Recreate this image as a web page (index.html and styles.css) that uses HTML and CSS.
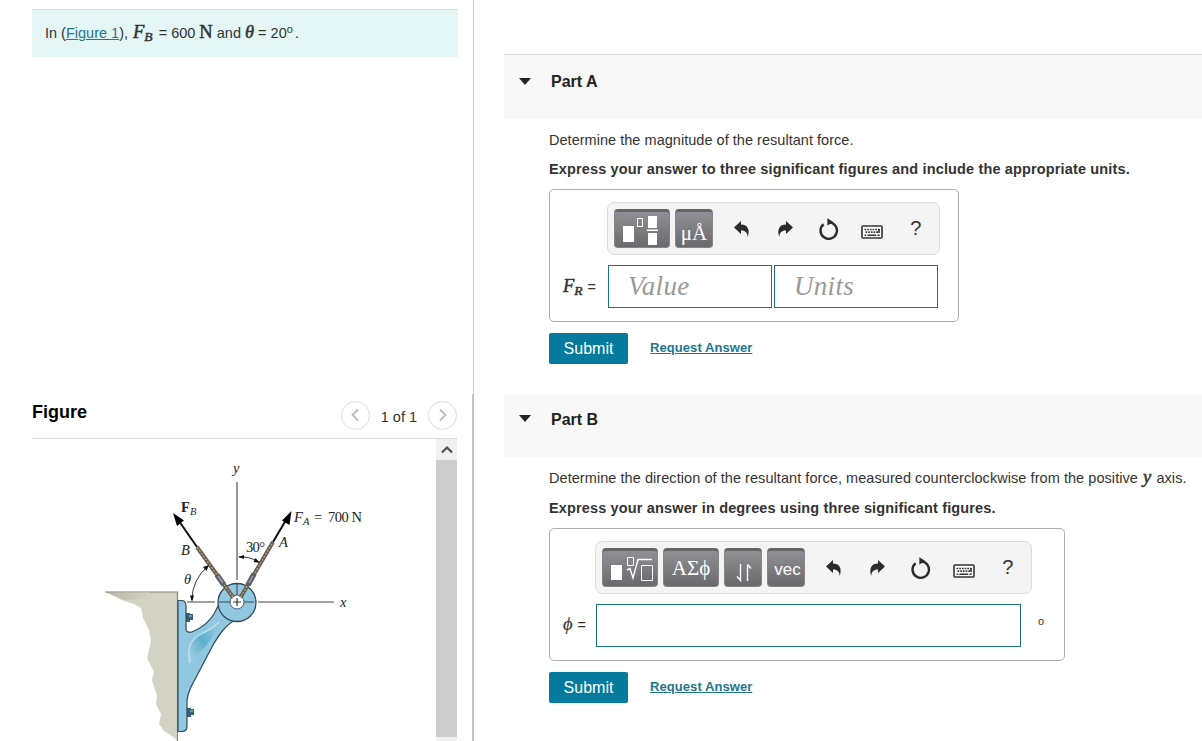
FILE: index.html
```
<!DOCTYPE html>
<html lang="en">
<head>
    <meta charset="UTF-8">
    <meta name="viewport" content="width=device-width, initial-scale=1.0">
    <title>Resultant Force</title>
    <link rel="stylesheet" href="styles.css">
</head>
<body>
    <!-- shared toolbar icons -->
    <svg class="defs" width="0" height="0">
        <symbol id="undo" viewBox="0 0 18 18">
            <path d="M1 7.5 L8 1 V4.6 C14 4.6 17.4 9 14.8 17 C14.4 12.4 12.2 10.2 8 10.4 V14 Z"/>
        </symbol>
        <symbol id="reset" viewBox="0 0 22 22">
            <path d="M11 4.4 A8.200 8.200 0 1 1 5.600 6.200" fill="none" stroke="#2b2b2b" stroke-width="2.400"/>
            <path d="M9.400 .2 L15.200 4 L9.400 7.600 Z"/>
        </symbol>
        <symbol id="keyboard" viewBox="0 0 22 14">
            <rect x="1" y="1" width="20" height="12" rx="1" fill="#fff" stroke="#333" stroke-width="1.600"/>
            <path d="M3.500 4.500 H18.800 M4.500 7.200 H17" stroke="#333" stroke-width="1.700" stroke-dasharray="1.700 1"/>
            <path d="M3.500 10.200 H5.200 M6.400 10.200 H15.300 M16.500 10.200 H18.700 M18 4 V8" stroke="#333" stroke-width="1.600"/>
        </symbol>
    </svg>

    <div class="page">
        <div class="left">
            <div class="intro">In (<a href="#">Figure 1</a>), <span class="math fb">F<sub>B</sub></span> = 600 <span class="math unit">N</span> and <span class="math theta">θ</span> = 20<sup>o</sup> .</div>

            <div class="figure-head">
                <h2>Figure</h2>
                <div class="pager">
                    <button class="round"><svg width="10" height="14"><path d="M8 1.500 L2.500 7 L8 12.500"/></svg></button>
                    <span>1 of 1</span>
                    <button class="round"><svg width="10" height="14"><path d="M2 1.500 L7.500 7 L2 12.500"/></svg></button>
                </div>
            </div>
            <div class="figure-body">
                <svg class="diagram" width="404" height="302" viewBox="32 439 404 302">
                    <defs>
                        <linearGradient id="rib" x1="0" y1="1" x2="1" y2="0">
                            <stop offset="0" stop-color="#a9d6e8"/>
                            <stop offset=".5" stop-color="#5faecb"/>
                            <stop offset="1" stop-color="#9bcfe5"/>
                        </linearGradient>
                        <linearGradient id="ledge" x1="0" y1="0" x2="1" y2="0">
                            <stop offset="0" stop-color="#a8a68f"/>
                            <stop offset="1" stop-color="#d3d2c3"/>
                        </linearGradient>
                    </defs>

                    <!-- wall -->
                    <path d="M105 592 H178 V741 L172 736 L164 731 L159 724 L161 714 L156 704 L157 696 L152 680 L154 672 L147 658 L151 641 L149 630 L143 618 L141 608 L134 604 L124 601 Z" fill="#d3d2c3"/>
                    <path d="M105 592 H177.500 V741" fill="none" stroke="#8b897a" stroke-width="1.200"/>
                    <path d="M106 592 H150 L140 599 L124 600 Z" fill="url(#ledge)" opacity=".6"/>

                    <!-- bolts -->
                    <path d="M186 613 h4 v1 h3 v6 h-3 v2 h-4 Z" fill="#385f78"/>
                    <path d="M187 708 h4 v1 h3 v6 h-3 v2 h-4 Z" fill="#385f78"/>
                    <path d="M189 616 h3 M190 711 h3" stroke="#9bcfe5"/>

                    <!-- bracket -->
                    <path d="M178 600.500 H182 Q186 601 186 606 V629 Q186 633 192 632 C202 628 209 622 214 614 L219 604 L236 620 C226 624 219 635 213 645 L191 687 Q187 696 187 702 V726 Q187 731.500 182 731.500 H178 Z" fill="#8fc8e0" stroke="#34495a" stroke-width="1.200"/>
                    <path d="M190 663 C187 645 191 639 203 633 Q212 629 219 622 Q213 638 205 647 Q198 654 190 663 Z" fill="url(#rib)"/>
                    <path d="M189.500 663 C187 645 191 639 203 633 Q212 629 219 622" fill="none" stroke="#c3e3ef" stroke-width="1.200"/>

                    <!-- pin -->
                    <circle cx="237" cy="602.500" r="19" fill="#8fc8e0" stroke="#34495a" stroke-width="1.300"/>
                    <path d="M187 602 H215 M219 602 H254 M258 602 H334 M237 482 V580 M237 584 V597" stroke="#444" stroke-width="1.100"/>
                    <circle cx="237" cy="602" r="7" fill="#fff" stroke="#496474"/>

                    <!-- ropes -->
                    <path d="M235 600 L197 547 M239 600 L273 542" stroke="#675b4d" stroke-width="4"/>
                    <path d="M235 600 L197 547 M239 600 L273 542" stroke="#b5a282" stroke-width="1.400" stroke-dasharray="2 1.500"/>
                    <path d="M224 585 L217 575 M248 585 L254 574" stroke="#59626b" stroke-width="5.500"/>
                    <path d="M223 583 L218 576 M249 583 L253 576" stroke="#9aa0a5" stroke-width="1.500"/>
                    <circle cx="237" cy="602" r="6" fill="#fff"/>
                    <path d="M233 602 H241 M237 598 V606" stroke="#333" stroke-width="1.200"/>

                    <!-- force arrows -->
                    <path d="M197 547 L179 521 M273 542 L286 520" stroke="#111" stroke-width="2"/>
                    <path d="M173 513 L184 520.500 L177 526 Z M291.500 511 L282 520.500 L289.500 525 Z" fill="#000"/>

                    <!-- angles -->
                    <path d="M192 600 Q192 580 208 566" fill="none" stroke="#333"/>
                    <path d="M239 557 Q249 556 259 562" fill="none" stroke="#333"/>
                    <path d="M192 602 L190 595.500 H194 Z M209 565 L206.500 571 L203 567 Z M238 557 L244 555 V559 Z M260 563 L253.500 562 L255.500 558 Z" fill="#111"/>

                    <g class="labels">
                        <text x="233" y="473" class="i">y</text>
                        <text x="340" y="607" class="i">x</text>
                        <text x="181" y="512" class="b">F</text>
                        <text x="190" y="515" class="i s">B</text>
                        <text x="181" y="555" class="i">B</text>
                        <text x="279" y="547" class="i">A</text>
                        <text x="184" y="584" class="i">θ</text>
                        <text x="246" y="552" textLength="19">30°</text>
                        <text x="294" y="522" class="i">F</text>
                        <text x="303" y="525" class="i s">A</text>
                        <text x="314" y="522">=</text>
                        <text x="328" y="522" textLength="34">700 N</text>
                    </g>
                </svg>
                <div class="scrollbar">
                    <div class="up"><svg width="12" height="9"><path d="M1 7.500 L6 2.500 L11 7.500"/></svg></div>
                    <div class="thumb"></div>
                </div>
            </div>
        </div>

        <div class="divider"></div>

        <div class="right">
            <section class="part part-a">
                <div class="part-head"><span class="caret"></span><h3>Part A</h3></div>
                <div class="part-body">
                    <p>Determine the magnitude of the resultant force.</p>
                    <p class="express">Express your answer to three significant figures and include the appropriate units.</p>
                    <div class="answer answer-a">
                        <div class="toolbar">
                            <button class="tool wide"><svg width="56" height="39">
                                <path d="M9 17 h11 v16 h-11 Z M34 7 h9 v12 h-9 Z M34 24 h9 v12 h-9 Z M33 20.500 h11 v1.500 h-11 Z" fill="#fff"/>
                                <rect x="23.500" y="9.500" width="5" height="8" fill="none" stroke="#fff"/>
                            </svg></button>
                            <button class="tool units">μÅ</button>
                            <div class="icons">
                                <svg width="18" height="18"><use href="#undo"/></svg>
                                <svg width="18" height="18" class="flip"><use href="#undo"/></svg>
                                <svg width="22" height="22"><use href="#reset"/></svg>
                                <svg width="22" height="14" class="kb"><use href="#keyboard"/></svg>
                                <span>?</span>
                            </div>
                        </div>
                        <div class="entry">
                            <label><span class="math">F<sub>R</sub></span> =</label>
                            <div class="field">Value</div>
                            <div class="field">Units</div>
                        </div>
                    </div>
                    <div class="actions">
                        <button class="submit">Submit</button>
                        <a href="#">Request Answer</a>
                    </div>
                </div>
            </section>

            <section class="part part-b">
                <div class="part-head"><span class="caret"></span><h3>Part B</h3></div>
                <div class="part-body">
                    <p class="direction">Determine the direction of the resultant force, measured counterclockwise from the positive <span class="math">y</span> axis.</p>
                    <p class="express">Express your answer in degrees using three significant figures.</p>
                    <div class="answer answer-b">
                        <div class="toolbar">
                            <button class="tool wide"><svg width="56" height="39">
                                <path d="M9 17 h11 v15 h-11 Z" fill="#fff"/>
                                <path d="M25.500 9.500 h6 v8 h-6 Z M39.500 17.500 h11 v15 h-11 Z" fill="none" stroke="#fff"/>
                                <path d="M25 22 L28 20.500 L31 30 L36 11.500 H50" fill="none" stroke="#fff" stroke-width="1.400"/>
                            </svg></button>
                            <button class="tool wide greek">ΑΣϕ</button>
                            <button class="tool"><svg width="38" height="39">
                                <path d="M16.500 16 V32 M13 28.500 L16.500 32.500 V16 M23.500 33 V17 M23.500 16.500 L27 20.500" fill="none" stroke="#fff" stroke-width="1.400"/>
                            </svg></button>
                            <button class="tool vec">vec</button>
                            <div class="icons">
                                <svg width="18" height="18"><use href="#undo"/></svg>
                                <svg width="18" height="18" class="flip"><use href="#undo"/></svg>
                                <svg width="22" height="22"><use href="#reset"/></svg>
                                <svg width="22" height="14" class="kb"><use href="#keyboard"/></svg>
                                <span>?</span>
                            </div>
                        </div>
                        <div class="entry">
                            <label><span class="math phi">ϕ</span> =</label>
                            <div class="field"></div>
                            <span class="degree">o</span>
                        </div>
                    </div>
                    <div class="actions">
                        <button class="submit">Submit</button>
                        <a href="#">Request Answer</a>
                    </div>
                </div>
            </section>
        </div>
    </div>
</body>
</html>
```
FILE: styles.css
```
* {
    box-sizing: border-box;
}
body {
    margin: 0;
    background: #fff;
    color: #333;
    font-family: "Liberation Sans", Arial, sans-serif;
    font-size: 14.5px;
    overflow: hidden;
}
h2, h3, p {
    margin: 0;
}
button {
    padding: 0;
    border: none;
    font-family: inherit;
    cursor: pointer;
}
svg {
    display: block;
}
.defs {
    display: none;
}
a {
    color: #1f7690;
}
sub, sup {
    line-height: 0;
}
.math {
    font-family: "Liberation Serif", "Times New Roman", serif;
    font-style: italic;
    font-size: 18.5px;
    line-height: 0;
    -webkit-text-stroke: 0.5px #333;
}
.math sub {
    font-size: 13.5px;
    vertical-align: -3px;
}
.page {
    display: flex;
    height: 741px;
}

/* left column */
.left {
    width: 473px;
    padding: 9px 15px 0 32px;
    display: flex;
    flex-direction: column;
}
.intro {
    height: 48px;
    width: 426px;
    padding-left: 13px;
    line-height: 47px;
    background: #e5f6f6;
    border-top: 1px solid #d3e0e2;
    white-space: nowrap;
}
.intro .fb {
    margin: 0 2px 0 1px;
}
.intro .unit {
    font-style: normal;
}
.intro sup {
    font-size: 11px;
    vertical-align: 5px;
    margin-right: -2px;
}
.figure-head {
    width: 425px;
    height: 48px;
    margin-top: 334px;
    display: flex;
    justify-content: space-between;
    border-bottom: 1px solid #d5d9d9;
}
.figure-head h2 {
    font-size: 18px;
    line-height: 20px;
    padding-top: 11px;
    color: #000;
}
.pager {
    display: flex;
    align-items: center;
    gap: 11px;
    padding-top: 1px;
}
.pager span {
    padding-top: 3px;
}
.round {
    width: 29px;
    height: 29px;
    border: 1px solid #dedede;
    border-radius: 50%;
    background: #fff;
    display: flex;
    align-items: center;
    justify-content: center;
}
.round path {
    fill: none;
    stroke: #bbb;
    stroke-width: 1.8;
}
.figure-body {
    display: flex;
    width: 425px;
    flex: 1;
}
.labels {
    font-family: "Liberation Serif", "Times New Roman", serif;
    font-size: 14.5px;
    fill: #222;
}
.labels .i {
    font-style: italic;
}
.labels .b {
    font-weight: bold;
}
.labels .s {
    font-size: 10.5px;
}
.scrollbar {
    width: 21px;
    background: #f0f0f0;
}
.up {
    height: 21px;
    display: flex;
    align-items: center;
    justify-content: center;
}
.up path {
    fill: none;
    stroke: #505050;
    stroke-width: 2.2;
}
.thumb {
    height: 277px;
    background: #cdcdcd;
}
.divider {
    width: 2px;
    margin-left: -1px;
    background: linear-gradient(to right, #fff 1px, #c0cfdb 1px) 0 0 / 2px 394px no-repeat, #bfc5c9;
}

/* right column */
.right {
    flex: 1;
    min-width: 0;
    padding: 54px 0 0 30px;
}
.part-head {
    height: 65px;
    padding: 0 0 10px 15px;
    display: flex;
    align-items: center;
    background: #f8f8f8;
    border-top: 1px solid #ddd;
}
.part-b .part-head {
    height: 63px;
    padding-bottom: 12px;
    border-top: none;
}
.part-b {
    margin-top: 30px;
}
.caret {
    border: 6px solid transparent;
    border-top: 7px solid #222;
    border-bottom: none;
    margin: 0 20px 2px 0;
}
h3 {
    font-size: 16px;
    color: #222;
}
.part-body {
    padding: 11px 0 0 45px;
}
.part-body p {
    height: 29px;
    line-height: 20px;
    letter-spacing: 0.03px;
    white-space: nowrap;
}
.part-body .express {
    height: 30px;
    font-weight: bold;
    letter-spacing: 0.145px;
}
.part-b .part-body p {
    height: 30px;
}
.part-body .direction {
    letter-spacing: 0.06px;
}
.direction .math {
    margin: 0 1px;
}
.answer {
    border: 1px solid #adadad;
    border-radius: 5px;
    height: 133px;
    padding-top: 12px;
}
.answer-a {
    width: 410px;
}
.answer-b {
    width: 516px;
}
.toolbar {
    width: 333px;
    height: 53px;
    margin-left: 57px;
    padding: 0 6px;
    display: flex;
    align-items: center;
    gap: 5px;
    background: #f4f4f4;
    border: 1px solid #dcdcdc;
    border-radius: 7px;
}
.answer-b .toolbar {
    width: 437px;
    margin-left: 45px;
}
.tool {
    flex: none;
    width: 38px;
    height: 39px;
    border: 1px solid #858585;
    border-top: 3px solid #666;
    border-radius: 4px;
    background: linear-gradient(#908f96, #6a6a6d);
    color: #fff;
}
.tool svg {
    margin: -3px 0 0 -1px;
}
.wide {
    width: 56px;
}
.units, .greek {
    font-family: "Liberation Serif", "Times New Roman", serif;
    font-size: 21px;
}
.units {
    padding-top: 8px;
}
.vec {
    font-size: 17px;
    padding: 3px 0 0 3px;
}
.icons {
    flex: none;
    display: grid;
    grid-template-columns: repeat(5, 43.5px);
    align-items: center;
    justify-items: center;
    margin-left: 2px;
    fill: #2b2b2b;
}
.icons span {
    font-size: 20px;
    color: #333;
}
.flip {
    transform: scaleX(-1);
}
.kb {
    margin-top: 6px;
}
.entry {
    display: flex;
    align-items: center;
    margin-top: 10px;
    padding-left: 13px;
}
.entry label {
    width: 45px;
    white-space: nowrap;
}
.entry label .math {
    margin-right: 1px;
}
.answer-b .entry label {
    width: 33px;
    margin-top: -2px;
}
.entry .phi {
    margin-right: -2px;
    -webkit-text-stroke: 0.2px #333;
}
.field {
    width: 164px;
    height: 43px;
    margin-right: 2px;
    padding-left: 19px;
    border: 1px solid #1c7287;
    font: italic 27px/40px "Liberation Serif", "Times New Roman", serif;
    letter-spacing: 0.3px;
    color: #999;
}
.answer-b .field {
    width: 425px;
}
.degree {
    font-size: 11px;
    margin: -10px 0 0 15px;
}
.actions {
    display: flex;
    align-items: center;
    margin-top: 11px;
}
.submit {
    width: 79px;
    height: 31px;
    margin-right: 22px;
    border-radius: 2px;
    background: #047a9c;
    color: #fff;
    font-size: 16px;
}
.actions a {
    font-size: 13px;
    font-weight: bold;
    letter-spacing: 0.07px;
    margin-top: -3px;
}
```
